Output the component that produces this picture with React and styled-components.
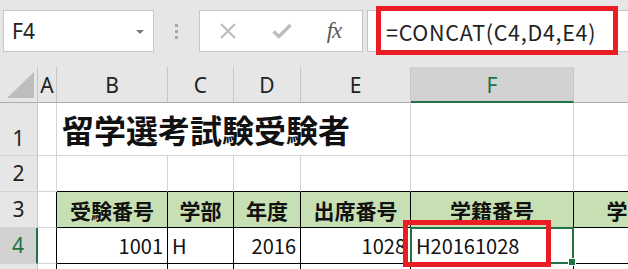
import React from "react";
import styled, { createGlobalStyle } from "styled-components";

const GREEN = "#217346";
const GRID = "#d4d4d4";
const HEAD_LINE = "#c6c6c6";
const JP = `"Noto Sans CJK JP", "Noto Sans", sans-serif`;

const GlobalStyle = createGlobalStyle`
    body {
        margin: 0;
        background: #ffffff;
        overflow: hidden;
    }
`;

const Window = styled.div`
    width: 628px;
    height: 269px;
    overflow: hidden;
    background: #ffffff;
`;

/* ---------- formula bar ---------- */

const FormulaBar = styled.div`
    height: 67px;
    box-sizing: border-box;
    padding: 10px 0 0 3px;
    display: flex;
    align-items: flex-start;
    background: #e6e6e6;
`;

const Box = styled.div`
    height: 42px;
    box-sizing: border-box;
    background: #ffffff;
    border: 1px solid ${HEAD_LINE};
    display: flex;
    align-items: center;
    position: relative;
`;

const NameBox = styled(Box)`
    width: 151px;
    padding-left: 8px;
    font-family: "Noto Sans", sans-serif;
    font-size: 21px;
    color: #222;
`;

const Caret = styled.span`
    position: absolute;
    right: 9px;
    top: 19px;
    border-left: 4px solid transparent;
    border-right: 4px solid transparent;
    border-top: 4px solid #7a7a7a;
`;

const Divider = styled.div`
    width: 45px;
    height: 42px;
    display: flex;
    flex-direction: column;
    align-items: center;
    justify-content: center;
    gap: 3px;
`;

const Dot = styled.span`
    width: 3px;
    height: 3px;
    background: #a8a8a8;
`;

const ActionBox = styled(Box)`
    width: 164px;
    margin-right: 4px;
    padding-left: 18px;
`;

const ActionSlot = styled.span`
    width: ${(p) => p.$w}px;
    display: flex;
    justify-content: center;
    align-items: center;
`;

const Fx = styled.span`
    font-family: "Liberation Serif", serif;
    font-style: italic;
    font-size: 23px;
    color: #5a5a5a;
    letter-spacing: -1px;
`;

const FormulaInput = styled(Box)`
    flex: 1;
    margin-right: -20px;
    padding-left: 18px;
    font-family: ${JP};
    font-size: 21.5px;
    color: #222;
    letter-spacing: 0.7px;
`;

const RedFrame = styled.div`
    position: absolute;
    border: 5px solid #ea1c24;
    box-sizing: border-box;
    left: ${(p) => p.$left}px;
    top: ${(p) => p.$top}px;
    width: ${(p) => p.$w}px;
    height: ${(p) => p.$h}px;
    z-index: 5;
    pointer-events: none;
`;

/* ---------- sheet ---------- */

const Sheet = styled.div`
    display: grid;
    grid-template-columns: 38px 19px 111px 66px 67px 110px 163px 150px;
    grid-template-rows: 36px 53px 36px 36px 36px 36px;
`;

const Cell = styled.div`
    box-sizing: border-box;
    position: relative;
    display: flex;
    align-items: center;
    justify-content: ${(p) => p.$align || "flex-start"};
    padding: 0 ${(p) => (p.$align === "flex-end" ? "4px" : "0")} 0
        ${(p) => (p.$align === "flex-start" || !p.$align ? "4px" : "0")};
    background: ${(p) => p.$bg || "#ffffff"};
    border-right: 1px solid ${(p) => p.$rb || GRID};
    border-bottom: 1px solid ${(p) => p.$bb || GRID};
    font-family: ${JP};
    font-size: ${(p) => p.$size || 20}px;
    font-weight: ${(p) => (p.$bold ? 700 : 400)};
    color: #111;
    white-space: nowrap;
    grid-column: ${(p) => p.$span || "auto"};
`;

const Corner = styled.div`
    box-sizing: border-box;
    position: relative;
    background: #e6e6e6;
    border-right: 1px solid ${HEAD_LINE};
    border-bottom: 1px solid #ababab;
`;

const CornerTriangle = styled.span`
    position: absolute;
    right: 3px;
    bottom: 4px;
    width: 0;
    height: 0;
    border-left: 27px solid transparent;
    border-bottom: 26px solid #bdbdbd;
`;

const ColHead = styled.div`
    box-sizing: border-box;
    display: flex;
    align-items: center;
    justify-content: center;
    background: ${(p) => (p.$active ? "#d2d2d2" : "#e6e6e6")};
    border-right: 1px solid ${HEAD_LINE};
    border-bottom: ${(p) => (p.$active ? `2px solid ${GREEN}` : "1px solid #ababab")};
    font-family: "Noto Sans", sans-serif;
    font-size: 21px;
    color: ${(p) => (p.$active ? GREEN : "#222")};
    padding-top: ${(p) => (p.$active ? "1px" : "0")};
`;

const RowHead = styled.div`
    box-sizing: border-box;
    display: flex;
    align-items: flex-start;
    justify-content: center;
    padding-top: ${(p) => p.$top || 3}px;
    background: ${(p) => (p.$active ? "#d2d2d2" : "#e6e6e6")};
    border-right: ${(p) => (p.$active ? `2px solid ${GREEN}` : `1px solid ${HEAD_LINE}`)};
    border-bottom: 1px solid ${GRID};
    font-family: "Noto Sans", sans-serif;
    font-size: 21px;
    color: ${(p) => (p.$active ? GREEN : "#222")};
`;

const Selection = styled.div`
    position: absolute;
    left: -1px;
    top: -1px;
    right: -1px;
    bottom: -1px;
    border: 2px solid ${GREEN};
    z-index: 3;
`;

const FillHandle = styled.span`
    position: absolute;
    right: -4px;
    bottom: -4px;
    width: 6px;
    height: 6px;
    background: ${GREEN};
    border: 1px solid #ffffff;
`;

const Title = styled.span`
    font-size: 32px;
    font-weight: 700;
    padding-left: 1px;
`;

const columns = ["A", "B", "C", "D", "E", "F", "G"];
const headers = ["受験番号", "学部", "年度", "出席番号", "学籍番号", "学部学科"];

function CancelIcon() {
    return (
        <svg width="18" height="18" viewBox="0 0 18 18">
            <path d="M2 2 L16 16 M16 2 L2 16" stroke="#bdbdbd" strokeWidth="2.2" fill="none" />
        </svg>
    );
}

function EnterIcon() {
    return (
        <svg width="20" height="16" viewBox="0 0 20 16">
            <path d="M1.5 8.5 L7 13.5 L18.5 2" stroke="#bdbdbd" strokeWidth="3.4" fill="none" strokeLinejoin="round" />
        </svg>
    );
}

function App() {
    const black = "#000000";

    return (
        <Window>
            <GlobalStyle />
            <FormulaBar>
                <NameBox>
                    F4
                    <Caret />
                </NameBox>
                <Divider>
                    <Dot />
                    <Dot />
                    <Dot />
                </Divider>
                <ActionBox>
                    <ActionSlot $w={20}>
                        <CancelIcon />
                    </ActionSlot>
                    <ActionSlot $w={88}>
                        <EnterIcon />
                    </ActionSlot>
                    <ActionSlot $w={16}>
                        <Fx>fx</Fx>
                    </ActionSlot>
                </ActionBox>
                <FormulaInput>
                    =CONCAT(C4,D4,E4)
                    <RedFrame $left={8} $top={-5} $w={242} $h={49} />
                </FormulaInput>
            </FormulaBar>

            <Sheet>
                {/* column headers */}
                <Corner>
                    <CornerTriangle />
                </Corner>
                {columns.map((c) => (
                    <ColHead key={c} $active={c === "F"}>
                        {c}
                    </ColHead>
                ))}

                {/* row 1 */}
                <RowHead $top={21}>1</RowHead>
                <Cell />
                <Cell $span="span 4">
                    <Title>留学選考試験受験者</Title>
                </Cell>
                <Cell />
                <Cell />

                {/* row 2 */}
                <RowHead>2</RowHead>
                <Cell />
                {[0, 1, 2, 3, 4, 5].map((i) => (
                    <Cell key={i} $bb={black} />
                ))}

                {/* row 3 */}
                <RowHead>3</RowHead>
                <Cell $rb={black} />
                {headers.map((h, i) => (
                    <Cell key={i} $bg="#c6e0b4" $rb={black} $bb={black} $bold $size={21} $align="center">
                        {h}
                    </Cell>
                ))}

                {/* row 4 */}
                <RowHead $active>4</RowHead>
                <Cell $rb={black} />
                <Cell $rb={black} $bb={black} $align="flex-end">1001</Cell>
                <Cell $rb={black} $bb={black}>H</Cell>
                <Cell $rb={black} $bb={black} $align="flex-end">2016</Cell>
                <Cell $rb={black} $bb={black} $align="flex-end">1028</Cell>
                <Cell $rb={black} $bb={black}>
                    <span style={{ paddingLeft: 1 }}>H20161028</span>
                    <Selection>
                        <FillHandle />
                    </Selection>
                    <RedFrame $left={-8} $top={-8} $w={148} $h={47} />
                </Cell>
                <Cell $rb={black} $bb={black} />

                {/* row 5 */}
                <RowHead>5</RowHead>
                <Cell $rb={black} />
                {[0, 1, 2, 3, 4, 5].map((i) => (
                    <Cell key={i} $rb={black} $bb={black} />
                ))}
            </Sheet>
        </Window>
    );
}

export default App;
